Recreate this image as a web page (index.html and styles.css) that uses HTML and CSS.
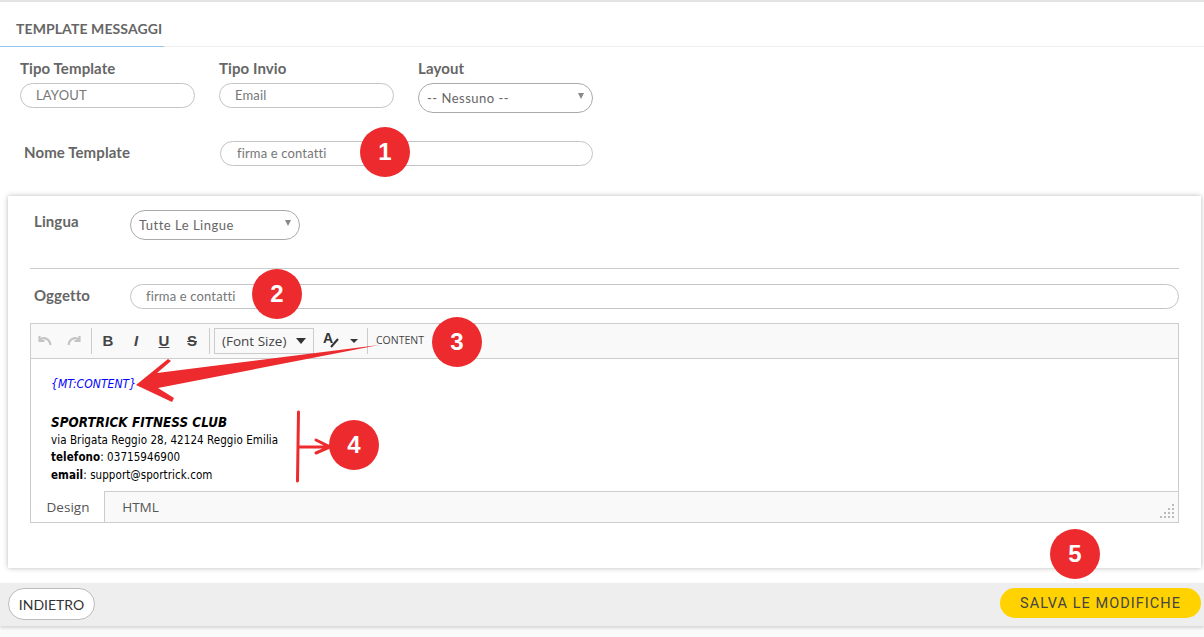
FILE: index.html
```html
<!DOCTYPE html>
<html lang="it">
<head>
<meta charset="utf-8">
<title>Template Messaggi</title>
<link rel="stylesheet" href="styles.css">
</head>
<body>
<div class="page">
  <header class="tabs"><div class="tab">TEMPLATE MESSAGGI</div></header>
  <section class="top-fields">
    <div class="field">
      <label class="label">Tipo Template</label>
      <input class="pill" value="LAYOUT" readonly>
    </div>
    <div class="field">
      <label class="label">Tipo Invio</label>
      <input class="pill" value="Email" readonly>
    </div>
    <div class="field">
      <label class="label">Layout</label>
      <div class="select select-layout">-- Nessuno --</div>
    </div>
  </section>
  <section class="name-row">
    <label class="label name-label">Nome Template</label>
    <input class="pill name-input" value="firma e contatti" readonly>
  </section>
  <section class="panel">
    <div class="lang-row">
      <label class="label panel-label">Lingua</label>
      <div class="select select-lang">Tutte Le Lingue</div>
    </div>
    <hr class="rule">
    <div class="subject-row">
      <label class="label panel-label">Oggetto</label>
      <input class="pill subject" value="firma e contatti" readonly>
    </div>
    <div class="editor">
      <div class="toolbar">
        <div class="group group-hist">
          <svg class="tool-icon" viewBox="0 0 16 16"><path class="hist" d="M2.5 3v5h5M2.5 7.5C5 4 12 4 13.5 12"/></svg>
          <svg class="tool-icon" viewBox="0 0 16 16"><path class="hist" d="M13.5 3v5h-5M13.5 7.5C11 4 4 4 2.5 12"/></svg>
        </div>
        <div class="group fmt">
          <span class="fmt-btn b">B</span><span class="fmt-btn i">I</span><span class="fmt-btn u">U</span><span class="fmt-btn s">S</span>
        </div>
        <div class="group group-size">
          <div class="size-box">(Font Size)<span class="caret"></span></div>
          <div class="color-btn">
            <span class="color-a">A</span>
            <svg class="color-icon" viewBox="0 0 10 12"><path class="color-slash" d="M1 11l7-8"/></svg>
          </div>
          <span class="caret small"></span>
        </div>
        <div class="group group-last"><span class="content-btn">CONTENT</span></div>
      </div>
      <div class="editor-body">
        <p class="merge">{MT:CONTENT}</p>
        <p class="club">SPORTRICK FITNESS CLUB</p>
        <p class="line">via Brigata Reggio 28, 42124 Reggio Emilia</p>
        <p class="line"><b>telefono</b>: 03715946900</p>
        <p class="line"><b>email</b>: support@sportrick.com</p>
      </div>
      <div class="editor-tabs">
        <span class="etab active">Design</span>
        <span class="etab">HTML</span>
        <svg class="grip" viewBox="0 0 16 16"><path d="M13 1h2v2h-2zM9 5h2v2H9zM13 5h2v2h-2zM5 9h2v2H5zM9 9h2v2H9zM13 9h2v2h-2zM1 13h2v2H1zM5 13h2v2H5zM9 13h2v2H9zM13 13h2v2h-2z"/></svg>
      </div>
    </div>
  </section>
  <footer class="footer">
    <button class="btn-back">INDIETRO</button>
    <button class="btn-save">SALVA LE MODIFICHE</button>
  </footer>
  <div class="below"></div>

  <svg class="arrows" viewBox="0 0 1204 637">
    <polygon points="136,385 168,359 171,361 157,373 379,345 158,388 174,398 172,402"/>
    <path d="M298.5 412l-1 69M298 447h30M316 440l14 7-14 6"/>
  </svg>
  <span class="badge b1">1</span>
  <span class="badge b2">2</span>
  <span class="badge b3">3</span>
  <span class="badge b4">4</span>
  <span class="badge b5">5</span>
</div>
</body>
</html>
```
FILE: styles.css
```css
* { box-sizing: border-box; }
html, body { margin: 0; padding: 0; }
body { background: #fff; font-family: "Lato", "Open Sans", sans-serif; color: #666; overflow: hidden; }
.page { position: relative; width: 1204px; height: 637px; border-top: 2px solid #e4e4e4; background: #fff; overflow: hidden; display: flex; flex-direction: column; }

.tabs { height: 45px; flex: none; border-bottom: 1px solid #eee; display: flex; }
.tab { width: 164px; height: 45px; padding: 18px 0 0 16px; border-bottom: 1px solid #90c6f0; font-size: 14px; font-weight: 700; line-height: 17px; color: #666; white-space: nowrap; letter-spacing: .1px; }

.label { font-size: 15px; font-weight: 700; color: #666; line-height: 18px; display: block; letter-spacing: .1px; }

.top-fields { display: flex; gap: 24px; padding: 12px 0 0 20px; flex: none; }
.field { width: 175px; display: flex; flex-direction: column; gap: 6px; }
.pill { display: block; font: 400 13px/1 "Lato", sans-serif; letter-spacing: .15px; color: #777; height: 25px; width: 175px; border: 1px solid #c4c4c4; border-radius: 13px; padding: 0 15px 2px; background: #fff; outline: 0; }
.select { position: relative; font-size: 13px; letter-spacing: .5px; color: #666; border: 1px solid #aaa; border-radius: 15px; background: #fff; height: 30px; padding-left: 8px; }
.select::after { content: ""; position: absolute; right: 8px; top: 9px; border: 3px solid transparent; border-top: 6px solid #888; border-bottom: 0; }
.select-layout { width: 175px; line-height: 29px; }
.select-lang { width: 170px; line-height: 28px; }

.name-row { display: flex; align-items: center; padding: 28px 0 0 24px; flex: none; }
.name-label { width: 196px; margin-top: -4px; }
.name-input { width: 373px; padding-left: 16px; }

.panel { margin: 30px 3px 0 8px; height: 372px; flex: none; padding: 14px 22px 0; background: #fff; box-shadow: 0 0 5px rgba(0,0,0,.28); }
.lang-row { display: flex; align-items: flex-start; padding-left: 4px; }
.panel-label { width: 96px; padding-top: 2px; }
.rule { margin: 28px 0 0; border: 0; border-top: 1px solid #ccc; }
.subject-row { display: flex; align-items: flex-start; padding: 15px 0 0 4px; }
.subject { flex: 1; width: auto; }

.editor { margin-top: 14px; height: 200px; border: 1px solid #ccc; display: flex; flex-direction: column; font-family: "Open Sans", sans-serif; }
.toolbar { height: 35px; flex: none; background: #f9f9f9; border-bottom: 1px solid #ccc; display: flex; align-items: center; }
.group { height: 26px; display: flex; align-items: center; border-right: 1px solid #ccc; }
.group-hist { width: 61px; padding-left: 6px; gap: 13px; }
.tool-icon { width: 16px; height: 16px; }
.hist { fill: none; stroke: #c4c4c4; stroke-width: 2.2; }
.fmt { width: 118px; padding: 0 0 2px 2px; }
.fmt-btn { width: 28px; text-align: center; font: 700 15px/1 "Liberation Sans", sans-serif; color: #444; }
.fmt-btn.i { font-style: italic; }
.fmt-btn.u { text-decoration: underline; }
.fmt-btn.s { text-decoration: line-through; }
.group-size { width: 158px; padding-left: 4px; }
.size-box { width: 100px; height: 26px; border: 1px solid #ccc; display: flex; align-items: center; padding-left: 7px; font-size: 13.5px; color: #444; white-space: nowrap; }
.caret { border: 5px solid transparent; border-top: 6px solid #333; border-bottom: 0; margin-left: 10px; }
.caret.small { border-width: 4px; border-bottom: 0; margin: 0 0 0 5px; }
.color-btn { width: 22px; height: 22px; margin-left: 9px; display: flex; align-items: flex-start; }
.color-a { font: 700 14px/16px "Liberation Sans", sans-serif; color: #333; }
.color-icon { width: 10px; height: 12px; margin: 6px 0 0 -3px; }
.color-slash { fill: none; stroke: #333; stroke-width: 2; }
.group-last { border-right: 0; padding: 0 0 2px 8px; }
.content-btn { font-size: 10.5px; color: #444; }

.editor-body { flex: 1; background: #fff; padding: 16px 0 0 20px; font-family: "DejaVu Sans Condensed", "DejaVu Sans", sans-serif; font-size: 11.5px; color: #000; letter-spacing: .07px; }
.editor-body p { margin: 0; }
.merge { font-size: 12px; font-style: italic; color: #00f; line-height: 18px; height: 35px; }
.club { font-size: 13.3px; font-style: italic; font-weight: 700; line-height: 20px; margin-top: 3px !important; margin-bottom: -1px !important; }
.line { line-height: 17.3px; }

.editor-tabs { height: 31px; flex: none; position: relative; background: #f9f9f9; border-top: 1px solid #ccc; display: flex; font-size: 13.5px; color: #555; }
.etab { width: 74px; display: flex; align-items: center; justify-content: center; }
.etab.active { background: #fff; border-right: 1px solid #ccc; margin-top: -1px; padding-left: 1px; }
.etab:not(.active) { padding-right: 3px; }
.grip { position: absolute; right: 3px; bottom: 3px; width: 16px; height: 16px; fill: #bbb; }

.footer { margin-top: 15px; height: 43px; flex: none; background: #eee; box-shadow: 0 2px 3px rgba(0,0,0,.15); display: flex; justify-content: space-between; align-items: flex-start; padding: 5px 3px 0 8px; position: relative; }
.btn-back { width: 87px; height: 32px; border: 1px solid #bbb; border-radius: 16px; background: #fff; font: 400 14px "Lato", sans-serif; color: #333; padding: 0; }
.btn-save { width: 201px; height: 30px; border: 0; border-radius: 15px; background: #ffd200; font: 400 14.5px "Roboto", sans-serif; letter-spacing: 1.05px; color: #444; padding: 0; }
.below { flex: 1; background: #fafafa; }

.arrows { position: absolute; left: 0; top: -2px; width: 1204px; height: 637px; pointer-events: none; }
.arrows polygon { fill: #ed2a2d; }
.arrows path { fill: none; stroke: #ed2a2d; stroke-width: 3; stroke-linecap: round; }
.badge { position: absolute; width: 50px; height: 50px; border-radius: 50%; background: #ed2a2d; color: #fff; font: 700 24px/50px "Liberation Sans", sans-serif; text-align: center; }
.b1 { left: 360px; top: 125px; }
.b2 { left: 252px; top: 267px; }
.b3 { left: 432px; top: 315px; }
.b4 { left: 329px; top: 418px; }
.b5 { left: 1050px; top: 527px; }
```
